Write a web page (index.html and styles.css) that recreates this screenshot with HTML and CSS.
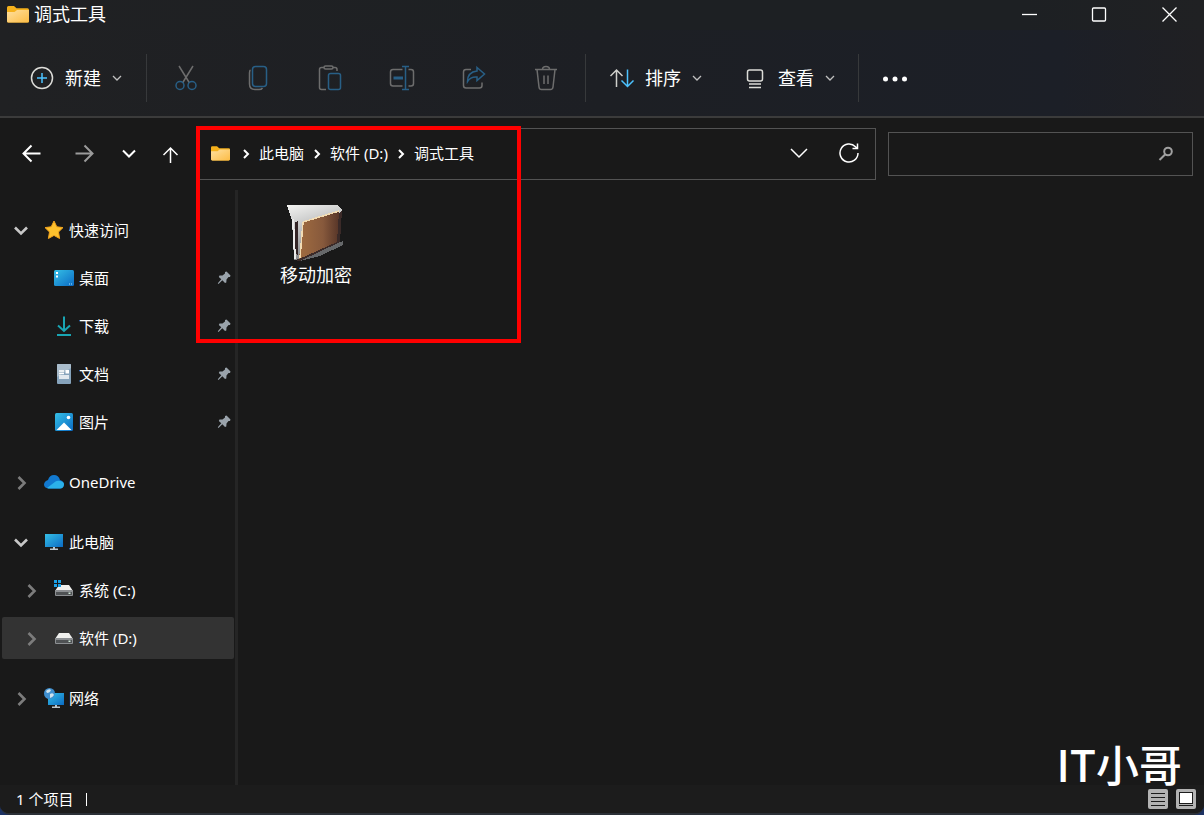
FILE: index.html
```html
<!DOCTYPE html>
<html lang="zh-CN">
<head>
    <meta charset="UTF-8">
    <meta name="viewport" content="width=device-width, initial-scale=1.0">
    <title>调式工具</title>
    <link rel="stylesheet" href="styles.css">
</head>
<body>
    <!-- shared icons -->
    <svg class="defs" width="0" height="0" aria-hidden="true">
        <defs>
            <linearGradient id="gold" x1="0" y1="0" x2="1" y2="1">
                <stop offset="0" stop-color="#ffe0a0"/>
                <stop offset="1" stop-color="#fcbc45"/>
            </linearGradient>
            <linearGradient id="blue" x1="0" y1="0" x2="1" y2="1">
                <stop offset="0" stop-color="#35bfe6"/>
                <stop offset="1" stop-color="#0b6bc4"/>
            </linearGradient>
            <linearGradient id="paper" x1="0" y1="0" x2="0.3" y2="1">
                <stop offset="0" stop-color="#f4f4f2"/>
                <stop offset="1" stop-color="#85878a"/>
            </linearGradient>
            <linearGradient id="leather" x1="0" y1="0" x2="1" y2="0">
                <stop offset="0" stop-color="#a06c40"/>
                <stop offset="0.6" stop-color="#87593c"/>
                <stop offset="1" stop-color="#573528"/>
            </linearGradient>
        </defs>
        <symbol id="folder" viewBox="0 0 22 17">
            <path d="M0 1.5Q0 0 1.5 0H7l2.5 2.3H20.500Q22 2.300 22 4V15Q22 16.500 20.500 16.500H1.500Q0 16.500 0 15Z" fill="#f5b11c"/>
            <path d="M0 6H7.500L10 4H22V15Q22 16.500 20.500 16.500H1.500Q0 16.500 0 15Z" fill="url(#gold)"/>
        </symbol>
        <symbol id="down" viewBox="0 0 12 12">
            <path d="M2 4L6 8L10 4" fill="none" stroke="currentColor" stroke-width="1.300"/>
        </symbol>
        <symbol id="open" viewBox="0 0 18 18">
            <path d="M3 6.500L9 12.500L15 6.500" fill="none" stroke="currentColor" stroke-width="2.600"/>
        </symbol>
        <symbol id="closed" viewBox="0 0 18 18">
            <path d="M6.500 4L12.500 10L6.500 16" fill="none" stroke="currentColor" stroke-width="2.600"/>
        </symbol>
        <symbol id="crumb" viewBox="0 0 8 10">
            <path d="M2 1L6 5L2 9" fill="none" stroke="currentColor" stroke-width="2"/>
        </symbol>
        <symbol id="pin" viewBox="0 0 14 14">
            <path d="M8 1L9.500 0.500L13.500 4.500L13 6L11.500 6L9.500 8.500L9.300 11.500L8 12L5.300 9.300L1.500 13L0.800 12.300L4.300 8.300L1.800 6L2.500 4.500L5.500 4.500L8 2.500Z" fill="#9aa3ab"/>
        </symbol>
        <symbol id="drive" viewBox="0 0 20 20">
            <path d="M5 5H15L19 11H1Z" fill="#f0f0ee"/>
            <rect x="1" y="10" width="18" height="6" rx="1" fill="#8c8f92"/>
            <rect x="2" y="12" width="16" height="3" fill="#4f5254"/>
            <rect x="14.500" y="12.500" width="2" height="1.500" fill="#cfe8d8"/>
        </symbol>
    </svg>

    <div class="window">
        <header class="titlebar">
            <svg class="title-icon"><use href="#folder"/></svg>
            <h1>调式工具</h1>
            <div class="window-controls">
                <button aria-label="最小化"><svg width="16" height="16"><path d="M1 7.500H16"/></svg></button>
                <button aria-label="最大化"><svg width="16" height="16"><rect x="1.500" y="1" width="13" height="13" rx="1"/></svg></button>
                <button aria-label="关闭"><svg width="16" height="16"><path d="M1.500 0.500L15.500 14.500M15.500 0.500L1.500 14.500"/></svg></button>
            </div>
        </header>

        <div class="toolbar">
            <button class="command">
                <svg width="26" height="26"><circle cx="13" cy="13" r="10.500" stroke="#dcdcd8"/><path d="M13 8V18M8 13H18" stroke="#4cc2ff"/></svg>
                新建
                <svg class="caret"><use href="#down"/></svg>
            </button>
            <span class="separator"></span>
            <div class="actions">
                <button aria-label="剪切" disabled>
                    <svg width="26" height="26"><path d="M6 1L16.500 18M20 1L9.500 18" stroke="#6d6d6d"/><circle cx="7" cy="20.500" r="4" class="accent"/><circle cx="19" cy="20.500" r="4" class="accent"/></svg>
                </button>
                <button aria-label="复制" disabled>
                    <svg width="26" height="26"><path d="M5.500 5Q4.500 5.500 4.500 8V19Q4.500 24.500 10 24.500H14Q16.500 24.500 17.500 23" stroke="#6d6d6d"/><rect x="7.500" y="1.500" width="14" height="20" rx="3" class="accent"/></svg>
                </button>
                <button aria-label="粘贴" disabled>
                    <svg width="26" height="26"><path d="M7 2.500H4.500Q2.500 2.500 2.500 4.500V22.500Q2.500 24.500 4.500 24.500H9M16 2.500H18Q20 2.500 20 4.500V6" stroke="#6d6d6d"/><rect x="7" y="1" width="9" height="3" rx="1.500" stroke="#6d6d6d"/><rect x="11.500" y="8.500" width="12" height="16" rx="2" class="accent"/></svg>
                </button>
                <button aria-label="重命名" disabled>
                    <svg width="26" height="26"><path d="M13.500 4.500H4Q1.500 4.500 1.500 7V18.500Q1.500 21 4 21H13.500M19.500 4.500H22Q24.500 4.500 24.500 7V18.500Q24.500 21 22 21H19.500" stroke="#6d6d6d"/><path d="M13 1.500H20M16.500 1.500V24.500M13 24.500H20" class="accent"/><path d="M4.500 13H14" class="accent thick"/></svg>
                </button>
                <button aria-label="共享" disabled>
                    <svg width="26" height="26"><path d="M10 4.500H5Q2.500 4.500 2.500 7V20.500Q2.500 23 5 23H18.500Q21 23 21 20.500V17.500" stroke="#6d6d6d"/><path d="M16 2.500L23.500 9L16 15.500V12Q9.500 11.500 6.500 16.500Q6.500 7 16 6Z" class="accent"/></svg>
                </button>
                <button aria-label="删除" disabled>
                    <svg width="26" height="26" stroke="#6d6d6d"><path d="M2 4.500H24M4 4.500L6 22Q6.300 24.500 8.500 24.500H17.500Q19.700 24.500 20 22L22 4.500M9.500 4.500Q9.500 1.500 13 1.500Q16.500 1.500 16.500 4.500M11 10.500V19M15 10.500V19"/></svg>
                </button>
            </div>
            <span class="separator"></span>
            <button class="command">
                <svg width="26" height="26"><path d="M7.500 22V5M1.500 11L7.500 5L13.500 11" stroke="#cfcfcb"/><path d="M18.500 4.500V21.500M12.500 15.500L18.500 21.500L24.500 15.500" stroke="#4cc2ff"/></svg>
                排序
                <svg class="caret"><use href="#down"/></svg>
            </button>
            <button class="command view">
                <svg width="26" height="26" stroke="#dcdcd8"><rect x="5.500" y="5" width="15" height="11" rx="2"/><path d="M7 19H19M7 22.500H19"/></svg>
                查看
                <svg class="caret"><use href="#down"/></svg>
            </button>
            <span class="separator"></span>
            <button class="command more" aria-label="查看更多">
                <svg width="26" height="26" class="dots"><circle cx="3.500" cy="14" r="2.500"/><circle cx="13" cy="14" r="2.500"/><circle cx="22.500" cy="14" r="2.500"/></svg>
            </button>
        </div>

        <div class="navbar">
            <button class="back" aria-label="后退"><svg width="20" height="20"><path d="M18.500 9.500H2M9.500 1.500L1.500 9.500L9.500 17.500"/></svg></button>
            <button class="forward" aria-label="前进"><svg width="20" height="20"><path d="M0.500 9.500H17M9.500 1.500L17.500 9.500L9.500 17.500"/></svg></button>
            <button class="recent" aria-label="最近浏览的位置"><svg width="14" height="10"><path d="M1 1.500L7 7.500L13 1.500"/></svg></button>
            <button class="up" aria-label="上移"><svg width="18" height="20"><path d="M8.500 19V4M1.500 11L8.500 4L15.500 11"/></svg></button>

            <div class="address">
                <svg class="address-icon"><use href="#folder"/></svg>
                <svg class="crumb-arrow"><use href="#crumb"/></svg>
                <a href="#">此电脑</a>
                <svg class="crumb-arrow"><use href="#crumb"/></svg>
                <a href="#">软件 (D:)</a>
                <svg class="crumb-arrow"><use href="#crumb"/></svg>
                <a href="#">调式工具</a>
                <button class="history" aria-label="以前的位置"><svg width="18" height="12"><path d="M1 1L9 9L17 1"/></svg></button>
                <button class="refresh" aria-label="刷新"><svg width="22" height="22"><path d="M20 10A9 9 0 1 1 17.500 3.800L19.500 5.500M19.500 0.500V5.500H14.500"/></svg></button>
            </div>

            <div class="search">
                <input type="text" aria-label="搜索">
                <svg width="16" height="16"><circle cx="10" cy="5.500" r="3.800"/><path d="M7.300 8.200L1.500 14"/></svg>
            </div>
        </div>

        <main>
            <nav class="sidebar">
                <ul>
                    <li><button>
                        <svg class="toggle light"><use href="#open"/></svg>
                        <svg class="icon" viewBox="0 0 20 20"><path d="M10 1L12.800 6.800L19 7.600L14.500 12L15.600 18.500L10 15.400L4.400 18.500L5.500 12L1 7.600L7.200 6.800Z" fill="#fdc12d" stroke="#f0a21c"/></svg>
                        <span>快速访问</span></button></li>
                    <li class="child"><button>
                        <svg class="toggle"></svg>
                        <svg class="icon" viewBox="0 0 20 20"><rect y="2" width="20" height="16" rx="1.500" fill="url(#blue)"/><path d="M2 4h2v2H2ZM2 7.500h2v2H2Z" fill="#fff"/><path d="M15 16h1M17 16h1" stroke="#a9e2ff"/></svg>
                        <span>桌面</span>
                        <svg class="pin"><use href="#pin"/></svg></button></li>
                    <li class="child"><button>
                        <svg class="toggle"></svg>
                        <svg class="icon" viewBox="0 0 20 20"><path d="M10 0.500V15M4 9.500L10 15L16 9.500M3 19H17" fill="none" stroke="#19a5b3" stroke-width="2"/></svg>
                        <span>下载</span>
                        <svg class="pin"><use href="#pin"/></svg></button></li>
                    <li class="child"><button>
                        <svg class="toggle"></svg>
                        <svg class="icon" viewBox="0 0 20 20"><rect x="3" width="14" height="20" rx="1" fill="#86a3bb"/><path d="M3 1Q3 0 4 0H16Q17 0 17 1V4L3 13Z" fill="#a9bccb"/><path d="M5 7H10M5 9.500H10M5 12H15M5 14H15" stroke="#fff" stroke-width="1.300"/><rect x="11.500" y="6" width="3.500" height="3.500" fill="#fff"/></svg>
                        <span>文档</span>
                        <svg class="pin"><use href="#pin"/></svg></button></li>
                    <li class="child"><button>
                        <svg class="toggle"></svg>
                        <svg class="icon" viewBox="0 0 20 20"><rect x="1" y="1" width="18" height="18" rx="1.500" fill="url(#blue)"/><path d="M2.500 18L10 10.500L17.500 18Z" fill="#fff"/><circle cx="14.500" cy="5.500" r="1.800" fill="#fff"/></svg>
                        <span>图片</span>
                        <svg class="pin"><use href="#pin"/></svg></button></li>
                </ul>
                <ul>
                    <li><button>
                        <svg class="toggle"><use href="#closed"/></svg>
                        <svg class="icon" viewBox="0 0 20 20"><path d="M4.500 16.500Q0 16 0 12.500Q0.300 9 4 8Q5.500 3 10 3Q14.500 3 16 8Q20 9 20 12.500Q19.500 16.500 16 16.500Z" fill="#1279cf"/><path d="M3 16L11.500 9.500Q13 8.500 16 9Q20 9.500 20 12.500Q19.500 16.500 16 16.500H4.500Z" fill="#2bb1ea"/></svg>
                        OneDrive</button></li>
                </ul>
                <ul>
                    <li><button>
                        <svg class="toggle light"><use href="#open"/></svg>
                        <svg class="icon" viewBox="0 0 20 20"><rect x="1" y="2" width="18" height="13" fill="url(#blue)"/><path d="M9 15H11V16.500H14V18H6V16.500H9Z" fill="#bcc6cc"/></svg>
                        <span>此电脑</span></button></li>
                    <li class="child"><button>
                        <svg class="toggle"><use href="#closed"/></svg>
                        <svg class="icon" viewBox="0 0 20 20"><use href="#drive" width="20" height="20"/><path d="M0 0h3v3H0ZM4 0h3v3H4ZM0 4h3v3H0ZM4 4h3v3H4Z" fill="#1ba1e8"/></svg>
                        <span>系统 (C:)</span></button></li>
                    <li class="child"><button class="selected">
                        <svg class="toggle"><use href="#closed"/></svg>
                        <svg class="icon"><use href="#drive"/></svg>
                        <span>软件 (D:)</span></button></li>
                </ul>
                <ul>
                    <li><button>
                        <svg class="toggle"><use href="#closed"/></svg>
                        <svg class="icon" viewBox="0 0 20 20"><rect x="4" y="5" width="16" height="12" fill="url(#blue)"/><path d="M11 17H13V18.500H16V20H8V18.500H11Z" fill="#bcc6cc"/><circle cx="5.500" cy="5.500" r="5.500" fill="#3f8fcf"/><path d="M2 3Q5 0 7 2Q6 5 3 5ZM6 6Q9 4 10 7Q8 10 6 10Z" fill="#cfe3ee"/></svg>
                        <span>网络</span></button></li>
                </ul>
            </nav>
            <section class="files">
                <button class="file">
                    <svg viewBox="0 0 60 60" width="60" height="60" shape-rendering="crispEdges">
                        <path d="M10 57L57 39V43L34 54L14 59Z" fill="#66686a"/>
                        <path d="M1 3H52L56 8L54 40L14 59L8 58L6 18Z" fill="#3b2a28"/>
                        <path d="M1 3H52L56 8L53 11L18 20L14 57L8 58L6 18Z" fill="url(#paper)"/>
                        <path d="M9 20L12 19V53L9 51Z" fill="#332425"/>
                        <path d="M7 17L9 57" stroke="#ecebea" stroke-width="2"/>
                        <path d="M17 20L53 9L51 40L13 57Z" fill="url(#leather)"/>
                        <path d="M17 20L53 9M17 20L14 56" fill="none" stroke="#f2dcb4" stroke-width="1.500"/>
                    </svg>
                    移动加密
                </button>
            </section>
        </main>

        <footer class="statusbar">
            <span class="count">1 个项目</span>
            <div class="view-modes">
                <button aria-label="详细信息"><svg width="20" height="20"><path d="M3 4.500H17M3 8.500H17M3 12.500H17M3 16.500H17"/></svg></button>
                <button aria-label="大图标"><svg width="20" height="20"><rect x="3.500" y="3.500" width="13" height="11" fill="#fff"/><path d="M3 16.500H17"/></svg></button>
            </div>
        </footer>
    </div>

    <div class="highlight"></div>
    <div class="watermark">IT小哥</div>
</body>
</html>
```

FILE: styles.css
```css
* {
    box-sizing: border-box;
}
body {
    margin: 0;
    background: #1d3263;
    color: #ffffff;
    font-family: "Noto Sans", "Noto Sans CJK SC", sans-serif;
    font-size: 15px;
    position: relative;
}
button {
    display: flex;
    align-items: center;
    justify-content: center;
    border: none;
    padding: 0;
    background: none;
    color: inherit;
    font: inherit;
}
svg {
    fill: none;
    flex-shrink: 0;
}
ul {
    list-style: none;
    margin: 0;
    padding: 0;
}
.defs {
    position: absolute;
}
.window {
    display: flex;
    flex-direction: column;
    min-height: 100vh;
    background: #191919;
    border-bottom: 2px solid #2b3037;
    border-radius: 0 0 10px 10px;
    overflow: hidden;
}

/* title bar */
.titlebar {
    display: flex;
    align-items: center;
    height: 30px;
    padding-left: 7px;
    background: linear-gradient(90deg, #202123, #1d2023 50%, #1d2023 85%, #202123);
}
.title-icon {
    width: 22px;
    height: 17px;
    margin-bottom: 2px;
}
h1 {
    margin: 0 0 2px 5px;
    font-size: 18px;
    line-height: 26px;
    font-weight: normal;
}
.window-controls {
    display: flex;
    margin-left: auto;
}
.window-controls button {
    width: 70px;
    height: 30px;
}
.window-controls svg {
    stroke: #ffffff;
    stroke-width: 1.3;
}

/* toolbar */
.toolbar {
    display: flex;
    align-items: center;
    height: 88px;
    padding: 10px 6px 0;
    border-bottom: 2px solid #3b3b3b;
    background: linear-gradient(90deg, #202123, #1d1f24 50%, #1c1f27 88%, #202023);
}
.toolbar svg {
    stroke-width: 1.5;
}
.command {
    gap: 10px;
    margin: 0 23px;
    font-size: 18px;
    line-height: 26px;
}
.command.view {
    margin: 0 22px 0 16px;
}
.caret {
    width: 12px;
    height: 12px;
    color: #c0c0c0;
}
.separator {
    width: 1px;
    height: 48px;
    background: #37393b;
}
.actions {
    display: flex;
    margin: 0 3px;
}
.actions button {
    width: 72px;
    height: 48px;
}
.accent {
    stroke: #285f86;
}
.thick {
    stroke-width: 3;
}
.dots {
    fill: #ffffff;
}

/* address row */
.navbar {
    display: flex;
    align-items: center;
    gap: 5px;
    padding: 10px 11px 10px 8px;
}
.navbar svg {
    stroke: currentColor;
    stroke-width: 2;
}
.back,
.forward {
    width: 48px;
    height: 44px;
}
.forward {
    color: #9b9b9b;
}
.recent {
    width: 30px;
    height: 44px;
}
.up {
    width: 44px;
    height: 44px;
}
.navbar .up svg,
.navbar .history svg,
.navbar .refresh svg {
    stroke-width: 1.5;
}
.address {
    display: flex;
    align-items: center;
    flex: 665 1 0;
    height: 52px;
    padding-left: 12px;
    border: 1px solid #535353;
}
.address a {
    padding-bottom: 3px;
    color: inherit;
    text-decoration: none;
    white-space: nowrap;
}
.navbar .address-icon {
    width: 19px;
    height: 15px;
    margin: 0 3px 2px 0;
    stroke: none;
}
.crumb-arrow {
    width: 8px;
    height: 10px;
    margin: 0 9px;
}
.navbar .crumb-arrow {
    stroke: none;
}
.history {
    width: 48px;
    height: 50px;
    margin-left: auto;
}
.refresh {
    width: 52px;
    height: 50px;
}
.search {
    display: flex;
    align-items: center;
    flex: 285 1 0;
    height: 44px;
    margin-left: 7px;
    padding-right: 18px;
    border: 1px solid #535353;
    color: #a0a0a0;
}
.search input {
    flex: 1;
    min-width: 0;
    height: 42px;
    padding: 0 10px;
    border: none;
    outline: none;
    background: none;
    color: #ffffff;
    font: inherit;
}

/* sidebar and files */
main {
    display: flex;
    flex: 1;
}
.sidebar {
    display: flex;
    flex-direction: column;
    gap: 12px;
    width: 238px;
    padding: 16px 1px 16px 2px;
    border-right: 3px solid #252525;
}
.sidebar li {
    padding: 3px 0;
}
.sidebar button {
    width: 232px;
    height: 42px;
    padding: 0 3px 0 10px;
    border-radius: 2px;
    justify-content: flex-start;
}
.sidebar .child button {
    padding-left: 20px;
}
.sidebar .selected {
    background: #333333;
}
.sidebar span {
    padding-bottom: 2px;
}
.toggle {
    width: 18px;
    height: 18px;
    margin-right: 14px;
    color: #7c7c7c;
}
.toggle.light {
    color: #c8c8c8;
}
.icon {
    width: 20px;
    height: 20px;
    margin-right: 5px;
}
.pin {
    width: 14px;
    height: 14px;
    margin-left: auto;
}
.files {
    flex: 1;
    padding: 12px 20px;
}
.file {
    flex-direction: column;
    width: 116px;
    font-size: 18px;
    line-height: 26px;
}

/* status bar */
.statusbar {
    display: flex;
    align-items: center;
    justify-content: space-between;
    height: 28px;
    padding: 0 8px 0 16px;
    background: #1c1c1c;
}
.count {
    padding-right: 13px;
    border-right: 1px solid #ffffff;
    line-height: 13px;
}
.view-modes {
    display: flex;
    gap: 8px;
}
.view-modes button {
    border-radius: 2px;
    background: #b3b3b3;
}
.view-modes svg {
    stroke: #1c1c1c;
}

/* overlays */
.highlight {
    position: absolute;
    top: 126px;
    left: 196px;
    width: 325px;
    height: 217px;
    border: 4px solid #ff0000;
    pointer-events: none;
}
.watermark {
    position: absolute;
    right: 22px;
    bottom: 24px;
    font-family: "Noto Sans CJK SC", sans-serif;
    font-size: 43px;
    line-height: 56px;
    font-weight: 500;
    pointer-events: none;
}
```
